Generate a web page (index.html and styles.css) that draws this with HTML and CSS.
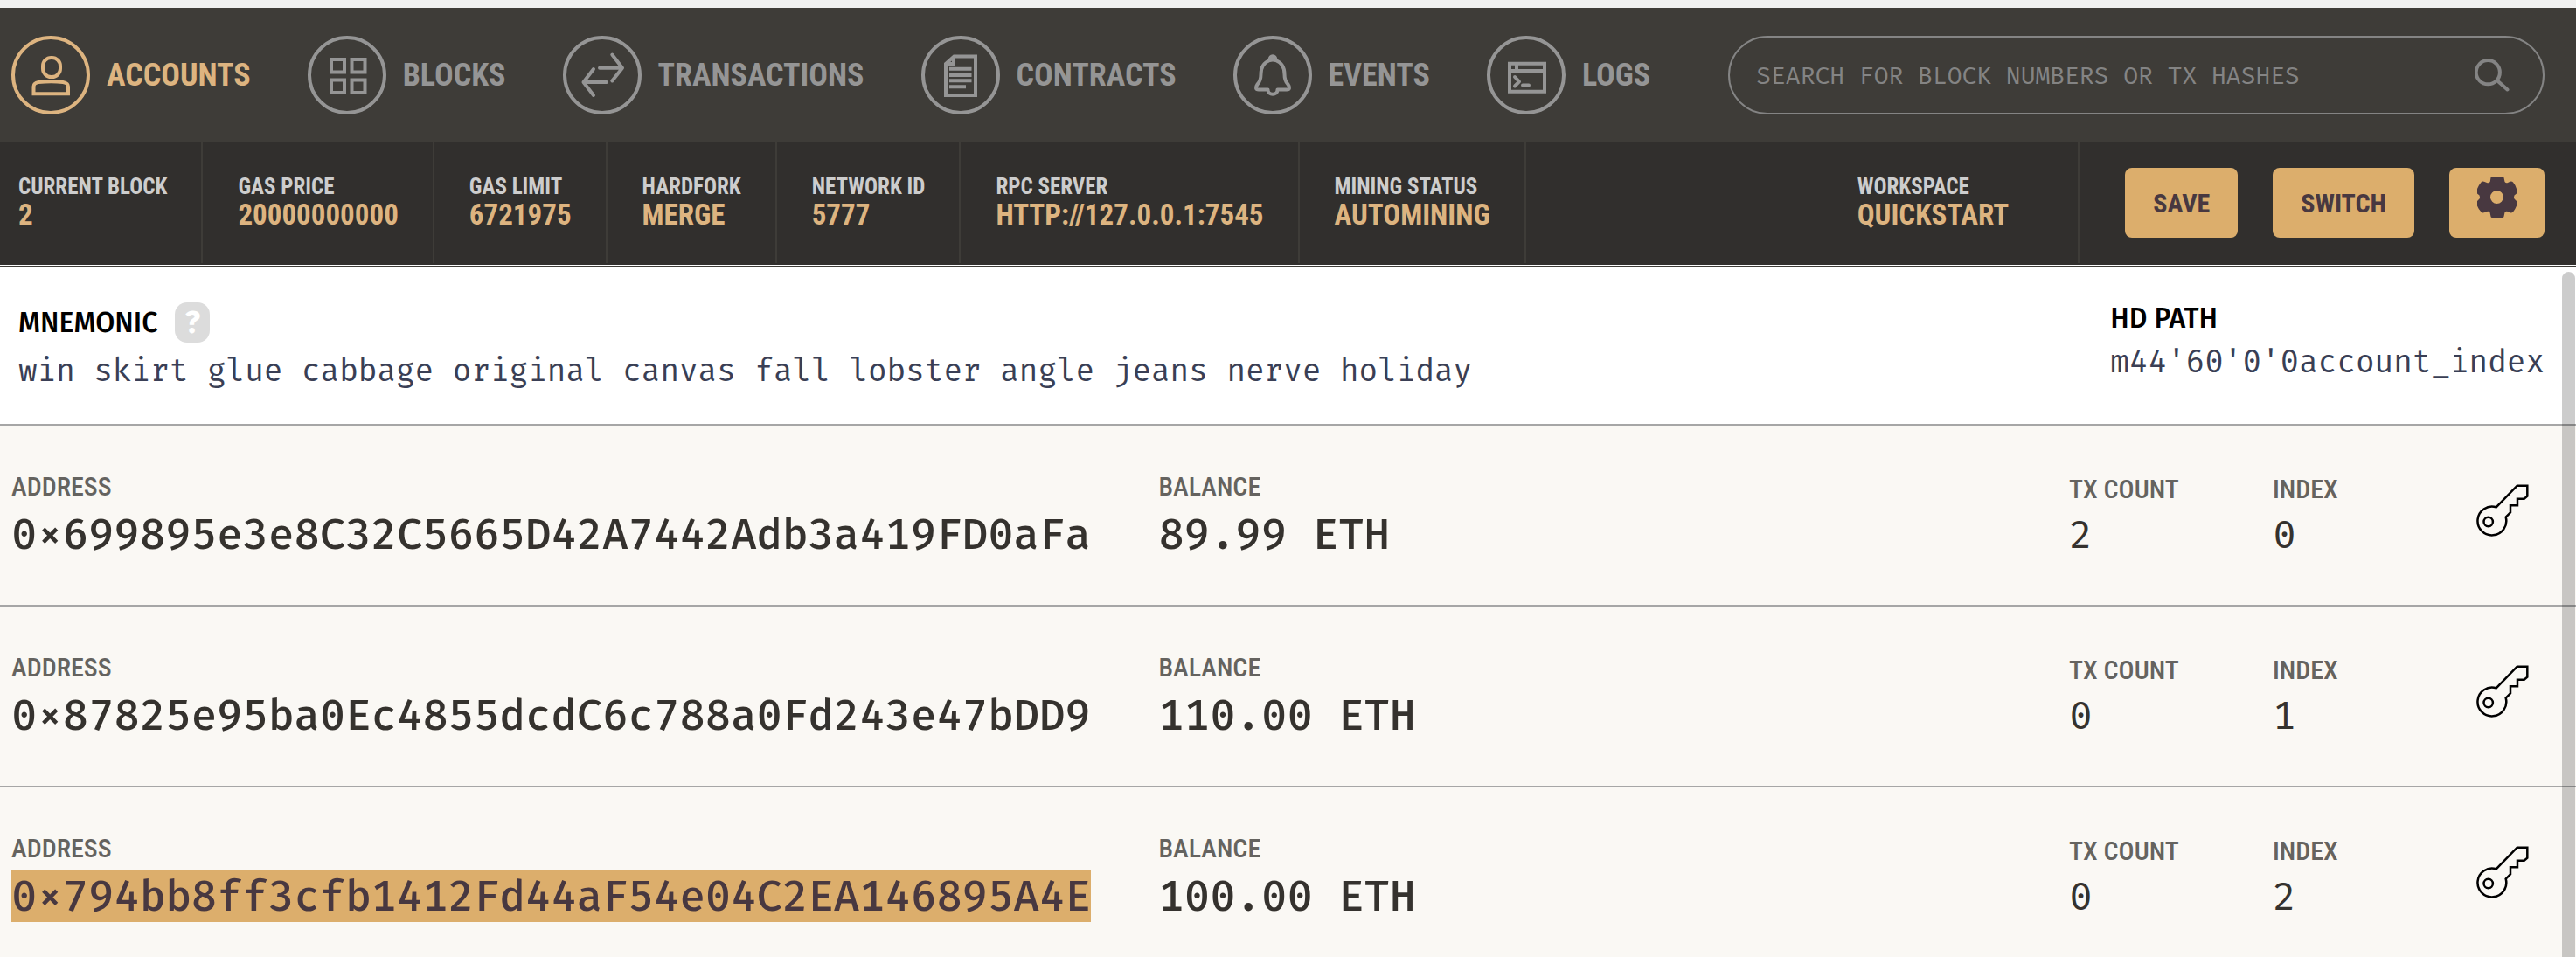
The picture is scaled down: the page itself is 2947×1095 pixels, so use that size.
FILE: index.html
```html
<!DOCTYPE html>
<html lang="en">
<head>
<meta charset="utf-8">
<title>Accounts</title>
<link rel="stylesheet" href="styles.css">
</head>
<body>
<header class="topbar">
  <nav class="nav">
    <a class="nav-item active" href="#accounts">
      <svg class="nav-icon" viewBox="0 0 90 90" aria-hidden="true"><circle cx="45" cy="45" r="43"/><rect x="36" y="25" width="20" height="22" rx="9.500"/><path d="M25.500 66.300V58Q25.500 54 31 53Q46 51.500 59 53Q65 54 65 58V66.300Z"/></svg>
      <span>ACCOUNTS</span>
    </a>
    <a class="nav-item" href="#blocks">
      <svg class="nav-icon" viewBox="0 0 90 90" aria-hidden="true"><circle cx="45" cy="45" r="43"/><path d="M27 27h15v14.500H27zM50.500 27h15v14.500h-15zM27 50.500h15V65H27zM50.500 50.500h15V65h-15z"/></svg>
      <span>BLOCKS</span>
    </a>
    <a class="nav-item" href="#transactions">
      <svg class="nav-icon" viewBox="0 0 90 90" aria-hidden="true"><circle cx="45" cy="45" r="43"/><path class="round" d="M42 36.700H67M56.300 21.500L68 36.700L56.300 51.500M50 53H25M35 38L23.500 53L35 68"/></svg>
      <span>TRANSACTIONS</span>
    </a>
    <a class="nav-item" href="#contracts">
      <svg class="nav-icon" viewBox="0 0 90 90" aria-hidden="true"><circle cx="45" cy="45" r="43"/><path d="M28 32L37.500 23.500H62V68H28ZM37 24V32H29M32 37.700H57.500M32 45H57.500M32 51.300H57.500M32 58.200H51"/></svg>
      <span>CONTRACTS</span>
    </a>
    <a class="nav-item" href="#events">
      <svg class="nav-icon" viewBox="0 0 90 90" aria-hidden="true"><circle cx="45" cy="45" r="43"/><path class="round" d="M41.500 28C41.500 21.500 48.500 21.500 48.500 28C55 30.500 58.500 36 58.500 44C58.500 50 60 53 62.500 55.500C65 59 64.500 61.500 61 61.500H50.500C50.500 68.500 39.500 68.500 39.500 61.500H29C25.500 61.500 25 59 27.500 55.500C30 53 31.500 50 31.500 44C31.500 36 35 30.500 41.500 28Q45 27 48.500 28"/></svg>
      <span>EVENTS</span>
    </a>
    <a class="nav-item" href="#logs">
      <svg class="nav-icon" viewBox="0 0 90 90" aria-hidden="true"><circle cx="45" cy="45" r="43"/><path d="M26 31.700H66V63.800H26ZM26 40H66M34 32V40"/><path class="round" d="M32 47L37 52.300L32 57.500M41 56.500H48"/></svg>
      <span>LOGS</span>
    </a>
  </nav>
  <form class="search">
    <input class="search-input" type="text" aria-label="Search" placeholder="SEARCH FOR BLOCK NUMBERS OR TX HASHES">
    <svg class="search-icon" viewBox="0 0 40 40" aria-hidden="true"><circle cx="15.300" cy="16.700" r="13.600"/><path d="M25.700 26L37.500 36.500"/></svg>
  </form>
</header>

<section class="status">
  <dl class="stats">
    <div class="stat"><dt>CURRENT BLOCK</dt><dd>2</dd></div>
    <div class="stat"><dt>GAS PRICE</dt><dd>20000000000</dd></div>
    <div class="stat"><dt>GAS LIMIT</dt><dd>6721975</dd></div>
    <div class="stat"><dt>HARDFORK</dt><dd>MERGE</dd></div>
    <div class="stat"><dt>NETWORK ID</dt><dd>5777</dd></div>
    <div class="stat"><dt>RPC SERVER</dt><dd>HTTP://127.0.0.1:7545</dd></div>
    <div class="stat"><dt>MINING STATUS</dt><dd>AUTOMINING</dd></div>
    <div class="stat workspace"><dt>WORKSPACE</dt><dd>QUICKSTART</dd></div>
  </dl>
  <div class="actions">
    <button class="btn" type="button">SAVE</button>
    <button class="btn" type="button">SWITCH</button>
    <button class="btn btn-gear" type="button" aria-label="Settings">
      <svg class="gear" viewBox="0 0 45 47" aria-hidden="true"><path fill-rule="evenodd" d="M14.700 6L15.500 1.200Q15.700 0 17 0H29Q30.300 0 30.500 1.200L31.500 6Q33 8 35 7L37 6Q39.500 5 41 6.500Q44 10 45 14V19.500L42.500 21.500Q41.500 23.500 42.500 25.500L45 28V33.500Q43.500 37.500 41 40.500Q39 42 37 41L35 40Q33 39 31.500 41L30.500 45.800Q30.300 47 29 47H17Q15.700 47 15.500 45.800L14.500 41Q13 39 11 40L8.500 41Q6 42 4.500 40.500Q1.500 37.500 0 33.500V28L2.500 25.500Q3.500 23.500 2.500 21.500L0 19.500V14Q1.500 10 4.500 6.500Q6 5 8.500 6L11 7Q13 8 14.700 6ZM22.500 16A7.500 7.500 0 1 0 22.500 31A7.500 7.500 0 1 0 22.500 16Z"/></svg>
    </button>
  </div>
</section>

<main class="main">
  <section class="mnemonic">
    <div>
      <div class="mnemonic-head"><h2>MNEMONIC</h2><button class="help" type="button">?</button></div>
      <p class="phrase">win skirt glue cabbage original canvas fall lobster angle jeans nerve holiday</p>
    </div>
    <div>
      <h2>HD PATH</h2>
      <p class="phrase">m44'60'0'0account_index</p>
    </div>
  </section>

  <ul class="accounts">
    <li class="account">
      <div class="cell"><span class="label">ADDRESS</span><span class="value">0×699895e3e8C32C5665D42A7442Adb3a419FD0aFa</span></div>
      <div class="cell"><span class="label">BALANCE</span><span class="value">89.99 ETH</span></div>
      <div class="cell"><span class="label">TX COUNT</span><span class="value small">2</span></div>
      <div class="cell"><span class="label">INDEX</span><span class="value small">0</span></div>
      <button class="key" type="button" aria-label="Show keys"><svg viewBox="0 0 60 60" aria-hidden="true"><path d="M22.700 26.300L46.700 1.700H58.300V13.700L54.700 16.700H47V24.300H39V32.300L33.700 37.700A16.400 16.400 0 1 1 22.700 26.300Z"/><circle cx="13.700" cy="43" r="5.200"/></svg></button>
    </li>
    <li class="account">
      <div class="cell"><span class="label">ADDRESS</span><span class="value">0×87825e95ba0Ec4855dcdC6c788a0Fd243e47bDD9</span></div>
      <div class="cell"><span class="label">BALANCE</span><span class="value">110.00 ETH</span></div>
      <div class="cell"><span class="label">TX COUNT</span><span class="value small">0</span></div>
      <div class="cell"><span class="label">INDEX</span><span class="value small">1</span></div>
      <button class="key" type="button" aria-label="Show keys"><svg viewBox="0 0 60 60" aria-hidden="true"><path d="M22.700 26.300L46.700 1.700H58.300V13.700L54.700 16.700H47V24.300H39V32.300L33.700 37.700A16.400 16.400 0 1 1 22.700 26.300Z"/><circle cx="13.700" cy="43" r="5.200"/></svg></button>
    </li>
    <li class="account">
      <div class="cell"><span class="label">ADDRESS</span><span class="value selected">0×794bb8ff3cfb1412Fd44aF54e04C2EA146895A4E</span></div>
      <div class="cell"><span class="label">BALANCE</span><span class="value">100.00 ETH</span></div>
      <div class="cell"><span class="label">TX COUNT</span><span class="value small">0</span></div>
      <div class="cell"><span class="label">INDEX</span><span class="value small">2</span></div>
      <button class="key" type="button" aria-label="Show keys"><svg viewBox="0 0 60 60" aria-hidden="true"><path d="M22.700 26.300L46.700 1.700H58.300V13.700L54.700 16.700H47V24.300H39V32.300L33.700 37.700A16.400 16.400 0 1 1 22.700 26.300Z"/><circle cx="13.700" cy="43" r="5.200"/></svg></button>
    </li>
  </ul>
  <div class="scrollbar"></div>
</main>
</body>
</html>
```
FILE: styles.css
```css
* { box-sizing: border-box; }

body {
  margin: 0;
  height: 100vh;
  display: flex;
  flex-direction: column;
  overflow: hidden;
  border-top: 9px solid #f0f0f0;
  background: #faf8f4;
  font-family: "Roboto Condensed", "Roboto", sans-serif;
}

h2, p, dl, dd, ul { margin: 0; padding: 0; }
button { border: 0; cursor: pointer; }

/* Top navigation */
.topbar {
  display: flex;
  align-items: center;
  gap: 89px;
  padding: 32px 36px 32px 13px;
  background: #3e3c38;
}

.nav { display: flex; gap: 65px; }

.nav-item {
  display: flex;
  align-items: center;
  gap: 19px;
  color: #959595;
  font-size: 36px;
  line-height: 42px;
  font-weight: 700;
  text-decoration: none;
}

.nav-item.active { color: #ddb480; }

.nav-icon {
  width: 90px;
  height: 90px;
  flex: none;
  fill: none;
  stroke: currentColor;
  stroke-width: 4;
}

.round { stroke-linecap: round; stroke-linejoin: round; }

.search {
  flex: 1;
  min-width: 0;
  height: 90px;
  display: flex;
  align-items: center;
  padding: 0 38px 0 30px;
  border: 2px solid #848484;
  border-radius: 45px;
}

.search-input {
  flex: 1;
  min-width: 0;
  padding: 0;
  border: 0;
  outline: 0;
  background: none;
  color: #848484;
  font-family: "Fira Mono", "Fira Code", "Liberation Mono", monospace;
  font-size: 28px;
}

.search-input::placeholder { color: #848484; opacity: 1; }

.search-icon {
  width: 40px;
  height: 40px;
  fill: none;
  stroke: #848484;
  stroke-width: 4;
  stroke-linecap: round;
}

/* Chain status bar */
.status {
  display: flex;
  background: #312f2d;
  padding-bottom: 2px;
  border-bottom: 1px solid #fff;
}

.stats { flex: 1; display: flex; }

.stat {
  display: flex;
  flex-direction: column;
  justify-content: center;
  height: 138px;
  padding: 0 39px 2px 40px;
  border-right: 2px solid #3e3c38;
  font-weight: 700;
  white-space: nowrap;
}

.stat:first-child { padding-left: 21px; }
.stat.workspace { margin-left: auto; padding-right: 79px; }
.stat dt { color: #cdcdcd; font-size: 25px; line-height: 30px; }
.stat dd { color: #ddb480; font-size: 33px; line-height: 34px; }

.actions {
  display: flex;
  align-items: center;
  gap: 40px;
  padding: 0 36px 0 52px;
}

.btn {
  height: 80px;
  padding: 0 32px;
  border-radius: 8px;
  background: #dcae6c;
  color: #483840;
  font-family: inherit;
  font-size: 30px;
  font-weight: 700;
}

.btn-gear { display: flex; padding: 10px 32px; }
.gear { width: 45px; height: 47px; fill: #483840; }

/* Mnemonic panel */
.main {
  position: relative;
  flex: 1;
  min-height: 0;
  overflow: hidden;
  border-top: 2px solid #3e3c38;
}

.mnemonic {
  display: flex;
  justify-content: space-between;
  padding: 40px 36px 39px 21px;
  border-bottom: 2px solid #a6a6a6;
  background: #fff;
}

.mnemonic-head { display: flex; align-items: center; gap: 20px; }

.mnemonic h2 {
  color: #000;
  font-family: "Fira Sans", "Open Sans", sans-serif;
  font-size: 32px;
  line-height: 36px;
  font-weight: 500;
}

.help {
  width: 40px;
  height: 46px;
  padding: 0;
  border-radius: 14px;
  background: #dcdcdc;
  color: #fff;
  font-family: "Fira Sans", "Open Sans", sans-serif;
  font-size: 36px;
  font-weight: 700;
}

.phrase {
  margin-top: 10px;
  color: #3a3f55;
  font-family: "Fira Mono", "Fira Code", "Liberation Mono", monospace;
  font-size: 36px;
  line-height: 44px;
  white-space: nowrap;
}

/* Account rows */
.accounts { list-style: none; }

.account {
  display: grid;
  grid-template-columns: 63fr 50fr 233px 233px 78px;
  align-items: center;
  padding: 52px 36px 51px 13px;
  border-bottom: 2px solid #a6a6a6;
}

.cell { display: flex; flex-direction: column; align-items: flex-start; gap: 7px; min-width: 0; }

.label {
  color: #65635f;
  font-size: 30px;
  line-height: 36px;
  font-weight: 500;
}

.value {
  color: #35322e;
  font-family: "Fira Mono", "Fira Code", "Liberation Mono", monospace;
  font-size: 49px;
  line-height: 59px;
  font-weight: 500;
  white-space: nowrap;
}

.value.small { font-size: 45px; line-height: 54px; font-weight: 400; }
.value.selected { background: #dcae6c; color: #483840; }

.key { width: 60px; height: 72px; padding: 0 0 12px; background: none; }
.key svg { display: block; width: 60px; height: 60px; fill: none; stroke: #000; stroke-width: 2.5; }

.scrollbar {
  position: absolute;
  top: 5px;
  right: 1px;
  bottom: -8px;
  width: 15px;
  border-radius: 8px;
  background: rgba(0, 0, 0, 0.2);
}
```
